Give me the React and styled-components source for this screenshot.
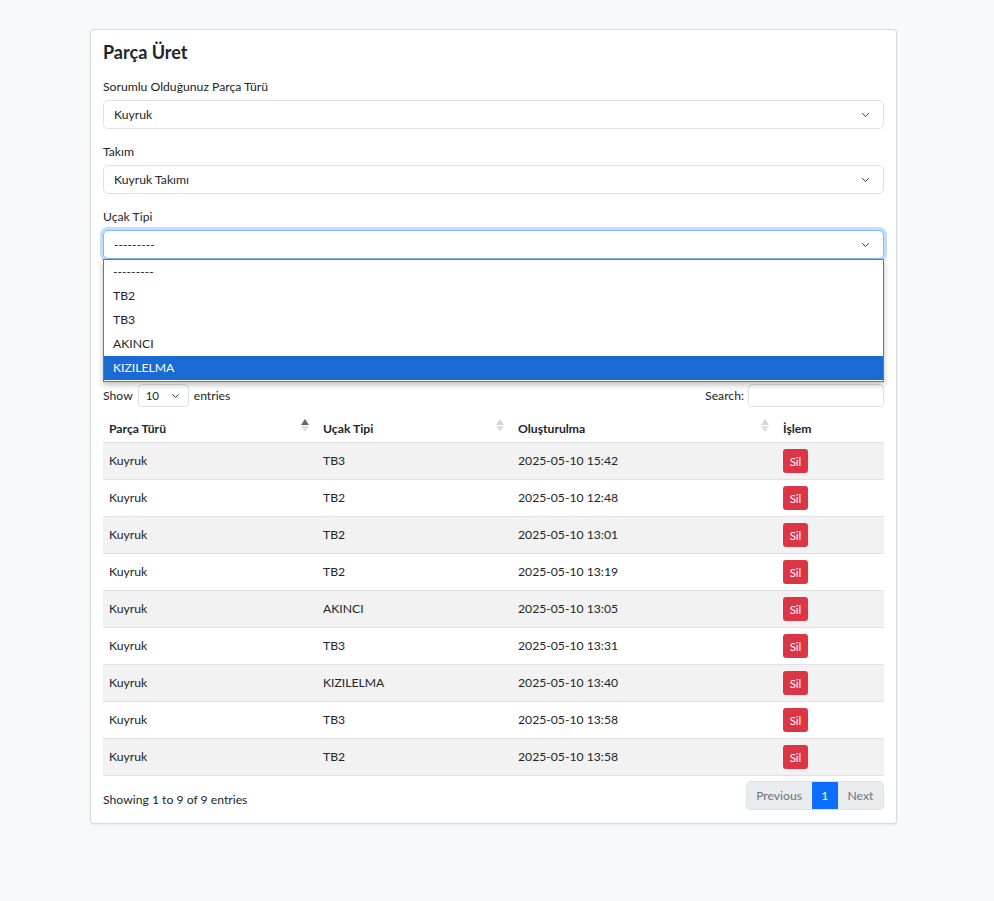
import React from "react";
import styled, { createGlobalStyle } from "styled-components";

const GlobalStyle = createGlobalStyle`
  body {
    margin: 0;
    background: #f8f9fa;
    font-family: Lato, "Noto Sans", "Liberation Sans", sans-serif;
    font-size: 12.2px;
    line-height: 19px;
    color: #212529;
  }
  * { box-sizing: border-box; }
`;

const Page = styled.div`
  padding: 29px 0 60px 90px;
  min-height: 901px;
`;

const Card = styled.div`
  width: 807px;
  background: #fff;
  border: 1px solid rgba(0, 0, 0, 0.15);
  border-radius: 4px;
  box-shadow: 0 1px 3px rgba(0, 0, 0, 0.08);
  padding: 12px 12px 13px;
`;

const Title = styled.h4`
  margin: -1px 0 13px;
  font-size: 18px;
  line-height: 23px;
  font-weight: 700;
`;

const Field = styled.div`
  position: relative;
  margin-bottom: 13px;
`;

const Label = styled.label`
  display: block;
  line-height: 19px;
  margin-bottom: 4px;
`;

const SelectBox = styled.div`
  display: flex;
  align-items: center;
  justify-content: space-between;
  height: 29px;
  padding: 0 12px 0 10px;
  border: 1px solid ${p => (p.$focus ? "#86b7fe" : "#dee2e6")};
  border-radius: 5px;
  background: #fff;
  box-shadow: ${p => (p.$focus ? "0 0 0 3px rgba(13,110,253,0.25)" : "none")};
`;

const Chevron = () => (
  <svg width="11" height="8" viewBox="0 0 16 16" fill="none">
    <path d="M2 5l6 6 6-6" stroke="#343a40" strokeWidth="2" strokeLinecap="round" strokeLinejoin="round" />
  </svg>
);

const OptionList = styled.ul`
  position: absolute;
  left: 0;
  right: 0;
  top: 52px;
  z-index: 5;
  margin: 0;
  padding: 0 0 1px;
  list-style: none;
  background: #fff;
  border: 1px solid #767676;
  box-shadow: 0 3px 6px rgba(0, 0, 0, 0.25);
`;

const Option = styled.li`
  height: 24px;
  line-height: 24px;
  padding-left: 9px;
  background: ${p => (p.$active ? "#1a6ad6" : "#fff")};
  color: ${p => (p.$active ? "#fff" : "#212529")};
`;

// area covered by the open option list
const FormFooter = styled.div`
  height: 112px;
`;

const Controls = styled.div`
  display: flex;
  justify-content: space-between;
  align-items: center;
  height: 23px;
`;

const Inline = styled.div`
  display: flex;
  align-items: center;
  gap: 4px;
`;

const SmallSelect = styled.div`
  display: flex;
  align-items: center;
  justify-content: space-between;
  width: 51px;
  height: 23px;
  margin: 0 1px;
  padding: 0 7px 0 7px;
  border: 1px solid #dee2e6;
  border-radius: 4px;
  font-size: 11.5px;
`;

const SearchInput = styled.input`
  width: 136px;
  height: 23px;
  border: 1px solid #dee2e6;
  border-radius: 4px;
`;

const Table = styled.table`
  width: 100%;
  margin-top: 3px;
  border-collapse: collapse;
  table-layout: fixed;
`;

const Th = styled.th`
  position: relative;
  text-align: left;
  font-weight: 700;
  padding: 9px 6px 4px;
  line-height: 19px;
  border-bottom: 1px solid #dee2e6;
`;

const SortIcon = styled.span`
  position: absolute;
  right: 8px;
  top: 9px;
  display: flex;
  flex-direction: column;
  gap: 1px;
`;

const Tri = styled.span`
  width: 0;
  height: 0;
  border-left: 4px solid transparent;
  border-right: 4px solid transparent;
  ${p =>
    p.$up
      ? `border-bottom: 6px solid ${p.$on ? "#666" : "#d6d6d6"};`
      : `border-top: 6px solid ${p.$on ? "#666" : "#dedede"};`}
`;

const Tr = styled.tr`
  background: ${p => (p.$odd ? "#f2f2f2" : "#fff")};
`;

const Td = styled.td`
  height: 37px;
  padding: 4px 6px 6px;
  border-bottom: 1px solid #dee2e6;
  vertical-align: middle;
  line-height: 19px;
`;

const DeleteButton = styled.button`
  width: 25px;
  height: 24px;
  margin-top: 2px;
  padding: 0;
  border: none;
  border-radius: 3px;
  background: #dc3545;
  color: #fff;
  font: inherit;
  font-size: 11.5px;
`;

const Footer = styled.div`
  display: flex;
  justify-content: space-between;
  align-items: center;
  margin-top: 5px;
`;

const Info = styled.span`
  padding-top: 7px;
`;

const Pager = styled.div`
  display: flex;
  height: 29px;
  border-radius: 4px;
  overflow: hidden;
  border: 1px solid #dee2e6;
`;

const PageLink = styled.span`
  display: flex;
  align-items: center;
  padding: 0 ${p => p.$pad || 9}px;
  background: ${p => (p.$active ? "#0d6efd" : "#e9ecef")};
  color: ${p => (p.$active ? "#fff" : "#6c757d")};
`;

const rows = [
  ["TB3", "2025-05-10 15:42"],
  ["TB2", "2025-05-10 12:48"],
  ["TB2", "2025-05-10 13:01"],
  ["TB2", "2025-05-10 13:19"],
  ["AKINCI", "2025-05-10 13:05"],
  ["TB3", "2025-05-10 13:31"],
  ["KIZILELMA", "2025-05-10 13:40"],
  ["TB3", "2025-05-10 13:58"],
  ["TB2", "2025-05-10 13:58"],
];

const options = ["---------", "TB2", "TB3", "AKINCI", "KIZILELMA"];

const Sort = ({ active }) => (
  <SortIcon>
    <Tri $up $on={active} />
    <Tri />
  </SortIcon>
);

const App = () => (
  <Page>
    <GlobalStyle />
    <Card>
      <Title>Parça Üret</Title>
      <Field>
        <Label>Sorumlu Olduğunuz Parça Türü</Label>
        <SelectBox>
          Kuyruk <Chevron />
        </SelectBox>
      </Field>
      <Field>
        <Label>Takım</Label>
        <SelectBox>
          Kuyruk Takımı <Chevron />
        </SelectBox>
      </Field>
      <Field>
        <Label>Uçak Tipi</Label>
        <SelectBox $focus>
          --------- <Chevron />
        </SelectBox>
        <OptionList>
          {options.map(o => (
            <Option key={o} $active={o === "KIZILELMA"}>
              {o}
            </Option>
          ))}
        </OptionList>
      </Field>
      <FormFooter />

      <Controls>
        <Inline>
          Show
          <SmallSelect>
            10 <Chevron />
          </SmallSelect>
          entries
        </Inline>
        <Inline>
          Search:
          <SearchInput />
        </Inline>
      </Controls>

      <Table>
        <colgroup>
          <col style={{ width: 214 }} />
          <col style={{ width: 195 }} />
          <col style={{ width: 265 }} />
          <col />
        </colgroup>
        <thead>
          <tr>
            <Th>
              Parça Türü <Sort active />
            </Th>
            <Th>
              Uçak Tipi <Sort />
            </Th>
            <Th>
              Oluşturulma <Sort />
            </Th>
            <Th>İşlem</Th>
          </tr>
        </thead>
        <tbody>
          {rows.map(([type, date], i) => (
            <Tr key={i} $odd={i % 2 === 0}>
              <Td>Kuyruk</Td>
              <Td>{type}</Td>
              <Td>{date}</Td>
              <Td>
                <DeleteButton>Sil</DeleteButton>
              </Td>
            </Tr>
          ))}
        </tbody>
      </Table>

      <Footer>
        <Info>Showing 1 to 9 of 9 entries</Info>
        <Pager>
          <PageLink $pad={9.6}>Previous</PageLink>
          <PageLink $active $pad={9.6}>1</PageLink>
          <PageLink $pad={9.6}>Next</PageLink>
        </Pager>
      </Footer>
    </Card>
  </Page>
);

export default App;
